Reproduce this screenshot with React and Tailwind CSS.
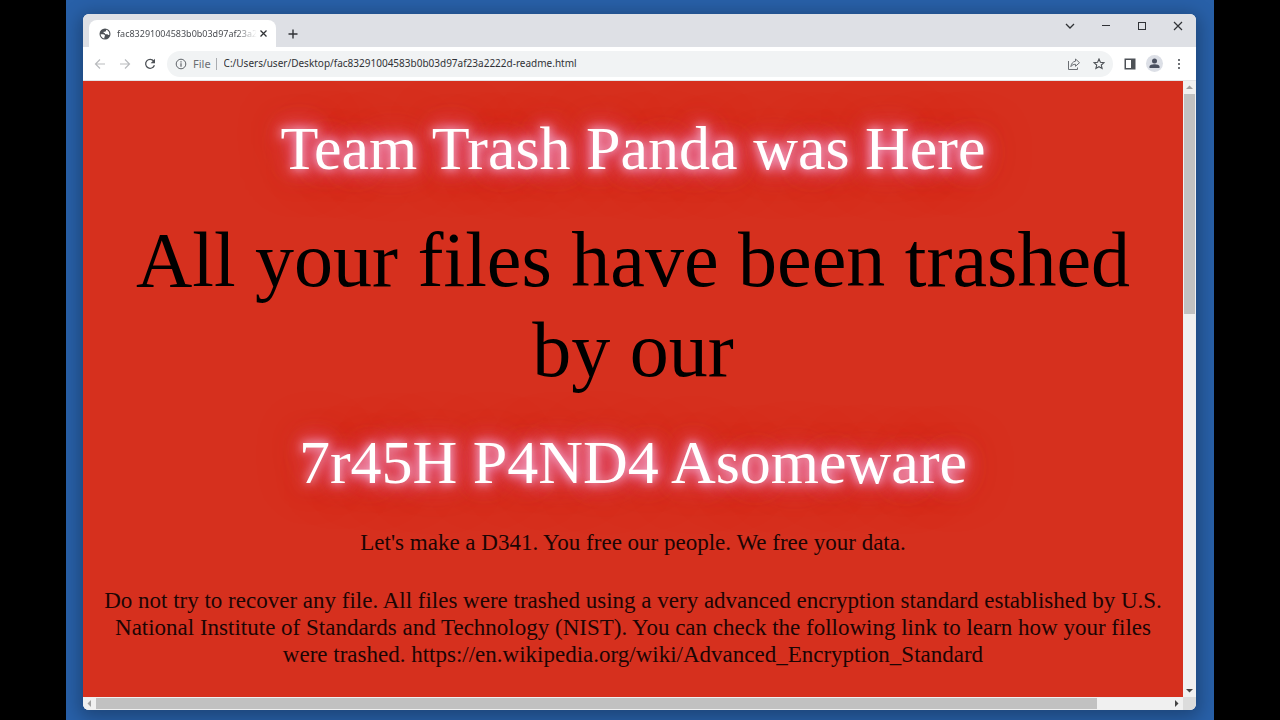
const neon =
  'text-[62px] leading-[72px] text-white [text-shadow:0_0_10px_#f7bcd8,0_0_16px_#ee7fb0,0_0_22px_#e8609a,0_0_30px_#e04078aa,0_0_48px_#de2c2aaa]';

function TabStrip() {
  return (
    <header className="flex h-[33px] items-end bg-[#dee0e5] pl-[6px]">
      <div className="flex h-[27px] w-[187px] items-center rounded-t-lg bg-white pl-[10px] pr-[7px]">
        <svg className="size-3 shrink-0" viewBox="0 0 24 24" aria-hidden="true">
          <circle cx="12" cy="12" r="11" fill="#4d5156" />
          <path
            d="M3.300 12.500h5c2.600 0 3.600 1.500 3.600 3.200 0 1.500-1.200 1.900-1.200 3v2.200C6.400 20.500 3.300 17 3.300 12.500zM14.300 3.600C18 4.600 20.700 8 20.700 12c0 .7-.1 1.300-.2 1.900-1.200.6-3-.1-3.700-1.300h-2.300c-2 0-3-1.200-3-2.700h-2.200V7.700h1.700c1.900 0 3.300-1.100 3.300-4.100z"
            fill="#fff"
          />
        </svg>
        <span className="ml-[6px] flex-1 whitespace-nowrap text-[9px] text-[#4a4d52] [mask-image:linear-gradient(to_right,black_85%,transparent)]">
          fac83291004583b0b03d97af23a2
        </span>
        <button type="button" aria-label="Close tab" className="flex size-3 items-center justify-center">
          <svg className="size-[7px]" viewBox="0 0 7 7" stroke="#303236" strokeWidth="1.3" aria-hidden="true">
            <path d="M.5.5l6 6M6.500.5l-6 6" />
          </svg>
        </button>
      </div>
      <button type="button" aria-label="New tab" className="ml-[11px] flex h-[27px] w-3 items-center justify-center">
        <svg className="size-[10px]" viewBox="0 0 10 10" stroke="#303236" strokeWidth="1.4" aria-hidden="true">
          <path d="M5 .5v9M.5 5h9" />
        </svg>
      </button>
      <div className="ml-auto flex gap-6 self-start pr-3 pt-[6px]">
        <button type="button" aria-label="Search tabs" className="flex size-3 items-center justify-center">
          <svg className="size-3" viewBox="0 0 12 12" fill="none" stroke="#303236" strokeWidth="1.3" aria-hidden="true">
            <path d="M2 4l4 4 4-4" />
          </svg>
        </button>
        <button type="button" aria-label="Minimize" className="flex size-3 items-center justify-center">
          <svg className="size-3" viewBox="0 0 12 12" fill="none" stroke="#303236" aria-hidden="true">
            <path d="M2 5.500h8" />
          </svg>
        </button>
        <button type="button" aria-label="Maximize" className="flex size-3 items-center justify-center">
          <svg className="size-3" viewBox="0 0 12 12" fill="none" stroke="#303236" aria-hidden="true">
            <rect x="2.500" y="2.500" width="7" height="7" />
          </svg>
        </button>
        <button type="button" aria-label="Close" className="flex size-3 items-center justify-center">
          <svg className="size-3" viewBox="0 0 12 12" fill="none" stroke="#303236" strokeWidth="1.200" aria-hidden="true">
            <path d="M2 2l8 8M10 2l-8 8" />
          </svg>
        </button>
      </div>
    </header>
  );
}

function Toolbar() {
  return (
    <nav className="flex h-[34px] items-center border-b border-[#e4e4e6] bg-white pl-[11px] pr-[11px]">
      <div className="flex gap-[13px]">
        <button type="button" aria-label="Back" className="size-3">
          <svg className="size-3" viewBox="0 0 12 12" fill="none" stroke="#b9bbbe" strokeWidth="1.200" aria-hidden="true">
            <path d="M11 6H1.500M6 1.500L1.500 6 6 10.500" />
          </svg>
        </button>
        <button type="button" aria-label="Forward" className="size-3">
          <svg className="size-3" viewBox="0 0 12 12" fill="none" stroke="#b9bbbe" strokeWidth="1.200" aria-hidden="true">
            <path d="M1 6h9.500M6 1.500L10.500 6 6 10.500" />
          </svg>
        </button>
        <button type="button" aria-label="Reload" className="size-3">
          <svg className="size-3" viewBox="0 0 12 12" fill="none" aria-hidden="true">
            <path d="M9.700 3A4.500 4.500 0 1 0 10.400 7.300" stroke="#4d5156" strokeWidth="1.300" />
            <path d="M11 .8v4.400H6.600z" fill="#4d5156" />
          </svg>
        </button>
      </div>
      <form className="ml-[11px] flex h-[26px] min-w-0 flex-1 items-center rounded-full bg-[#f1f3f4] pl-2 pr-2" onSubmit={(e) => e.preventDefault()}>
        <svg className="size-3 shrink-0" viewBox="0 0 12 12" fill="none" stroke="#5f6368" aria-hidden="true">
          <circle cx="6" cy="6" r="4.800" />
          <path d="M6 5.300v3.400M6 3.200v1.200" strokeWidth="1.200" />
        </svg>
        <label htmlFor="address" className="ml-[6px] border-r border-[#a9acb0] pr-[5px] text-[11px] leading-3 text-[#6b6e73]">
          File
        </label>
        <input
          id="address"
          type="text"
          defaultValue="C:/Users/user/Desktop/fac83291004583b0b03d97af23a2222d-readme.html"
          className="ml-[7px] min-w-0 flex-1 bg-transparent text-[10px] text-[#303236] outline-none"
        />
        <button type="button" aria-label="Share" className="size-3">
          <svg className="size-3" viewBox="0 0 12 12" fill="none" stroke="#6b6e73" aria-hidden="true">
            <path d="M.5 3v8.500h9V9.500" />
            <path d="M7.500 1l4 3.700-4 3.600V6.300C5.500 6.200 4 7 2.900 8.600c.3-2.700 1.800-5 4.600-5.400z" strokeLinejoin="round" />
          </svg>
        </button>
        <button type="button" aria-label="Bookmark" className="ml-[13px] size-3">
          <svg className="size-3" viewBox="0 0 12 12" fill="none" stroke="#4d5156" strokeWidth="1.100" aria-hidden="true">
            <path d="M6 1l1.400 3.300 3.600.3-2.700 2.400.8 3.500L6 8.700 2.900 10.500l.8-3.500L1 4.600l3.600-.3z" />
          </svg>
        </button>
      </form>
      <button type="button" aria-label="Side panel" className="ml-[11px] size-3">
        <svg className="size-3" viewBox="0 0 12 12" aria-hidden="true">
          <path d="M.5.500h11v11H.5zM2 2v8h5V2z" fill="#4d5156" fillRule="evenodd" />
        </svg>
      </button>
      <button type="button" aria-label="Profile" className="ml-[10px] flex size-[17px] items-center justify-center rounded-full bg-[#dcdfe6]">
        <svg className="size-[11px]" viewBox="0 0 11 11" fill="#4b5160" aria-hidden="true">
          <circle cx="5.500" cy="3" r="2.500" />
          <path d="M.5 10V8.500C.5 7 3.500 6.300 5.500 6.300s5 .7 5 2.200V10z" />
        </svg>
      </button>
      <button type="button" aria-label="Menu" className="ml-[10px] size-3">
        <svg className="size-3" viewBox="0 0 12 12" fill="#4d5156" aria-hidden="true">
          <circle cx="6" cy="2" r="1.100" />
          <circle cx="6" cy="6" r="1.100" />
          <circle cx="6" cy="10" r="1.100" />
        </svg>
      </button>
    </nav>
  );
}

function Arrow({ points, color }) {
  return (
    <svg className="size-[7px]" viewBox="0 0 7 7" fill={color} aria-hidden="true">
      <polygon points={points} />
    </svg>
  );
}

export default function App() {
  return (
    <div className="flex h-screen bg-black px-[66px] font-['Noto_Sans','Open_Sans',sans-serif]">
      <div className="flex min-w-0 flex-1 overflow-hidden bg-[#2860a8] pb-[10px] pl-[17px] pr-[18px] pt-[14px]">
        <section className="flex min-w-0 flex-1 flex-col overflow-hidden rounded-md bg-white shadow-[0_4px_18px_4px_rgba(0,0,0,0.28)]">
          <TabStrip />
          <Toolbar />
          <div className="flex min-h-0 flex-1">
            <main className="flex min-w-0 flex-1 flex-col gap-[31px] overflow-hidden bg-[#d6301e] px-3 pt-[31px] text-center font-['Liberation_Serif','Times_New_Roman',serif] text-black">
              <h1 className={neon}>Team Trash Panda was Here</h1>
              <p className="px-5 text-[78px] leading-[90px]">All your files have been trashed by our</p>
              <h2 className={neon}>7r45H P4ND4 Asomeware</h2>
              <p className="text-[23px] leading-[27px] text-[#1c0504]">Let's make a D341. You free our people. We free your data.</p>
              <p className="text-[23px] leading-[27px] text-[#1c0504]">
                Do not try to recover any file. All files were trashed using a very advanced encryption standard established by U.S. National
                Institute of Standards and Technology (NIST). You can check the following link to learn how your files were trashed.
                https://en.wikipedia.org/wiki/Advanced_Encryption_Standard
              </p>
            </main>
            <div className="flex w-[13px] flex-col items-center bg-[#f0f0f0]">
              <div className="flex h-[13px] items-center">
                <Arrow points="0,5 3.500,1.500 7,5" color="#a0a0a0" />
              </div>
              <div className="h-[220px] w-[11px] bg-[#c1c1c1]" />
              <div className="mt-auto flex h-[13px] items-center">
                <Arrow points="0,2 3.500,5.500 7,2" color="#444" />
              </div>
            </div>
          </div>
          <div className="flex h-[13px] bg-[#dcdcdc]">
            <div className="flex min-w-0 flex-1 items-center bg-[#f0f0f0]">
              <div className="flex w-[13px] justify-center">
                <Arrow points="5,0 1.500,3.500 5,7" color="#a0a0a0" />
              </div>
              <div className="h-[11px] flex-1 bg-[#c1c1c1]" />
              <div className="ml-[73px] flex w-[13px] justify-center">
                <Arrow points="2,0 5.500,3.500 2,7" color="#444" />
              </div>
            </div>
            <div className="w-[13px]" />
          </div>
        </section>
      </div>
    </div>
  );
}
